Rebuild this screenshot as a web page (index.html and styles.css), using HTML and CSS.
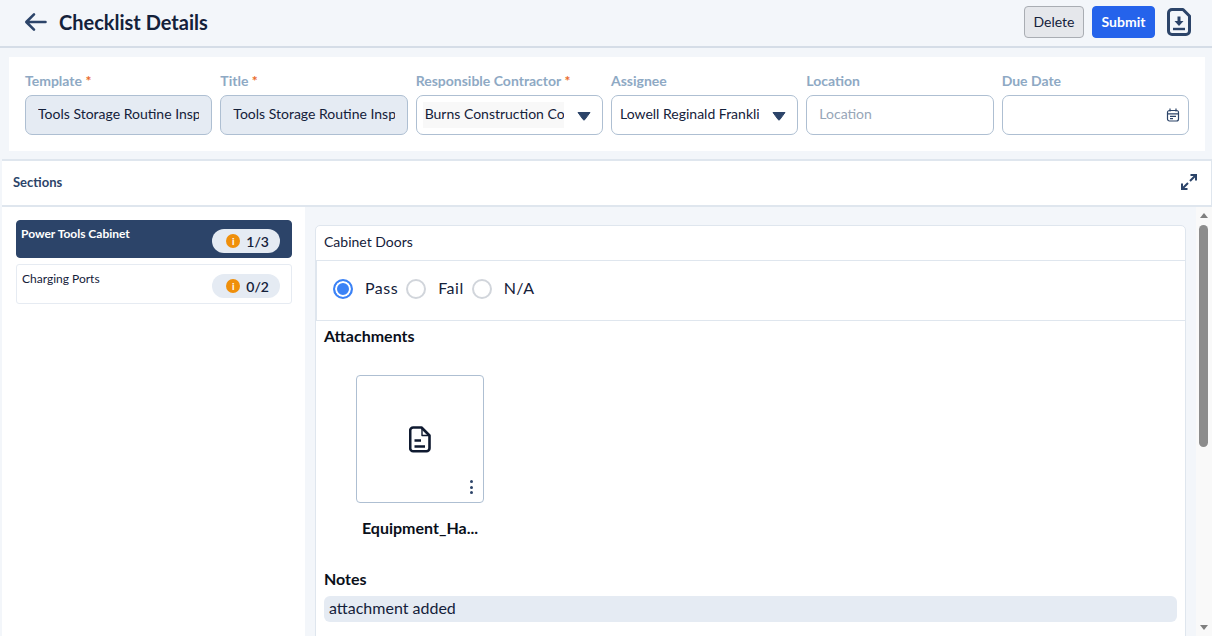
FILE: index.html
```html
<!DOCTYPE html>
<html lang="en">
<head>
  <meta charset="UTF-8">
  <title>Checklist Details</title>
  <link rel="stylesheet" href="styles.css">
</head>
<body>
  <header class="topbar">
    <div class="topbar-left">
      <svg class="back-icon" width="24" height="20" viewBox="0 0 24 20" fill="none"><path d="M21.500 10H2.500M10 2.300 2.300 10l7.700 7.700" stroke="#2c4469" stroke-width="2.600" stroke-linecap="round" stroke-linejoin="round"/></svg>
      <h1>Checklist Details</h1>
    </div>
    <div class="topbar-actions">
      <button class="btn btn-delete">Delete</button>
      <button class="btn btn-submit">Submit</button>
      <svg class="export-icon" width="24" height="28" viewBox="0 0 24 28" fill="none">
        <path d="M5 1.500h11l6.500 6.500v15a3.500 3.500 0 0 1-3.500 3.500H5A3.500 3.500 0 0 1 1.500 23V5A3.500 3.500 0 0 1 5 1.500Z" stroke="#2c4469" stroke-width="3" stroke-linejoin="round"/>
        <path d="M12 8.500v6" stroke="#2c4469" stroke-width="3"/>
        <path d="M7.500 13h9L12 18Z" fill="#2c4469"/>
        <path d="M6 21h12" stroke="#2c4469" stroke-width="2.400"/>
      </svg>
    </div>
  </header>

  <section class="form-panel">
    <div class="form-grid">
      <div class="field">
        <label>Template <span class="req">*</span></label>
        <input class="input input-locked" type="text" value="Tools Storage Routine Inspection" readonly>
      </div>
      <div class="field">
        <label>Title <span class="req">*</span></label>
        <input class="input input-locked" type="text" value="Tools Storage Routine Inspection" readonly>
      </div>
      <div class="field">
        <label>Responsible Contractor <span class="req">*</span></label>
        <div class="input select">
          <span class="select-value select-value-shaded">Burns Construction Company</span>
          <svg class="caret" width="14" height="10" viewBox="0 0 14 10"><path d="M1 1.500h12L7.800 8.600a1 1 0 0 1-1.600 0Z" fill="#2c4469" stroke="#2c4469" stroke-linejoin="round"/></svg>
        </div>
      </div>
      <div class="field">
        <label>Assignee</label>
        <div class="input select">
          <span class="select-value">Lowell Reginald Franklin</span>
          <svg class="caret" width="14" height="10" viewBox="0 0 14 10"><path d="M1 1.500h12L7.800 8.600a1 1 0 0 1-1.600 0Z" fill="#2c4469" stroke="#2c4469" stroke-linejoin="round"/></svg>
        </div>
      </div>
      <div class="field">
        <label>Location</label>
        <input class="input" type="text" placeholder="Location">
      </div>
      <div class="field">
        <label>Due Date</label>
        <div class="input date">
          <svg width="14" height="14" viewBox="0 0 14 14" fill="none" stroke="#2c4469" stroke-width="1.200">
            <rect x="1.500" y="2.500" width="11" height="10.500" rx="2"/>
            <path d="M4 .6v3M10 .6v3M1.500 5.800h11M4 8.300h6M4 10.600h3"/>
          </svg>
        </div>
      </div>
    </div>
  </section>

  <section class="sections">
    <div class="sections-head">
      <h2>Sections</h2>
      <svg width="16" height="16" viewBox="0 0 16 16" fill="none" stroke="#2c4469" stroke-width="2"><path d="M9.500 1H15v5.500M15 1 9 7M6.500 15H1V9.500M1 15l6-6"/></svg>
    </div>
    <div class="sections-body">
      <aside class="section-list">
        <div class="section-item active">
          <span class="section-name">Power Tools Cabinet</span>
          <span class="count"><span class="count-dot">i</span>1/3</span>
        </div>
        <div class="section-item">
          <span class="section-name">Charging Ports</span>
          <span class="count"><span class="count-dot">i</span>0/2</span>
        </div>
      </aside>

      <main class="detail">
        <div class="card">
          <div class="card-title">Cabinet Doors</div>
          <div class="radio-row">
            <span class="radio checked"></span><span class="radio-label">Pass</span>
            <span class="radio"></span><span class="radio-label">Fail</span>
            <span class="radio"></span><span class="radio-label">N/A</span>
          </div>
          <h3 class="block-title">Attachments</h3>
          <div class="attachment">
            <div class="thumb">
              <svg width="22" height="27" viewBox="0 0 22 27" fill="none" stroke="#0f1a30" stroke-width="2.600" stroke-linejoin="round">
                <path d="M4.200 1.500h8.300l8 8v12.800a3 3 0 0 1-3 3H4.200a3 3 0 0 1-3-3V4.500a3 3 0 0 1 3-3Z"/>
                <path d="M13 2v7.500h7" stroke-width="1.400"/>
                <path d="M5.500 14.500h6.500M5.500 20.500h10.500"/>
              </svg>
              <span class="thumb-menu"><i></i><i></i><i></i></span>
            </div>
            <div class="file-name">Equipment_Ha...</div>
          </div>
          <h3 class="block-title notes-title">Notes</h3>
          <div class="note-text">attachment added</div>
        </div>
      </main>

      <div class="scrollbar">
        <span class="arrow-up"></span>
        <span class="thumb-bar"></span>
        <span class="arrow-down"></span>
      </div>
    </div>
  </section>
</body>
</html>
```

FILE: styles.css
```css
* {
  box-sizing: border-box;
}

html, body {
  height: 100%;
}

body {
  margin: 0;
  height: 636px;
  overflow: hidden;
  display: flex;
  flex-direction: column;
  background-color: #f3f6fa;
  color: #14213a;
  font-family: Lato, "Liberation Sans", sans-serif;
}

/* top bar */
.topbar {
  height: 48px;
  flex: none;
  display: flex;
  justify-content: space-between;
  align-items: center;
  padding: 0 21px 2px 24px;
  border-bottom: 2px solid #d5dde7;
}

.topbar-left {
  display: flex;
  align-items: center;
  gap: 11px;
}

h1 {
  margin: 0;
  font-size: 20px;
  font-weight: 700;
  color: #14213a;
}

.topbar-actions {
  display: flex;
  align-items: center;
}

.btn {
  height: 32px;
  padding: 0 0 2px;
  border-radius: 4px;
  font-family: inherit;
  font-size: 14px;
}

.btn-delete {
  width: 60px;
  background-color: #e5e7eb;
  border: 1px solid #a9adb3;
  color: #14213a;
}

.btn-submit {
  width: 63px;
  margin-left: 8px;
  background-color: #2563eb;
  border: 1px solid #2563eb;
  color: #fff;
  font-weight: 700;
}

.export-icon {
  margin-left: 12px;
}

/* form */
.form-panel {
  flex: none;
  margin: 9px 7px 8px 9px;
  background-color: #fff;
  height: 94px;
  padding: 15px 16px 0;
}

.form-grid {
  display: grid;
  grid-template-columns: repeat(6, 1fr);
  gap: 8px;
}

.field label {
  display: block;
  height: 23px;
  font-size: 14px;
  font-weight: 700;
  line-height: 18px;
  color: #8ea9c4;
}

.req {
  color: #ea6a2a;
}

.input {
  display: block;
  width: 100%;
  height: 40px;
  padding: 0 12px 3px 12px;
  border: 1px solid #aebfd2;
  border-radius: 7px;
  background-color: #fff;
  font-family: inherit;
  font-size: 14px;
  color: #14213a;
  outline: none;
}

.input::placeholder {
  color: #97a6b8;
  opacity: 1;
}

.input-locked {
  background-color: #e5ebf3;
}

.select {
  display: flex;
  align-items: center;
  justify-content: space-between;
  padding: 0 11px 0 6px;
}

.select-value {
  width: 141px;
  height: 26px;
  line-height: 24px;
  overflow: hidden;
  white-space: nowrap;
  padding-left: 2px;
}

.select-value-shaded {
  background-color: #f8f8f8;
}

.caret {
  margin-top: 1px;
}

.date {
  display: flex;
  align-items: center;
  justify-content: flex-end;
  padding: 0 8px 0 0;
}

/* sections */
.sections {
  flex: 1;
  min-height: 0;
  margin-left: 2px;
  display: flex;
  flex-direction: column;
  background-color: #fff;
  border-top: 2px solid #dfe6ee;
}

.sections-head {
  height: 46px;
  flex: none;
  display: flex;
  justify-content: space-between;
  align-items: center;
  padding: 0 14px 2px 11px;
  border-right: 1px solid #dfe6ee;
  border-bottom: 2px solid #dfe6ee;
}

h2 {
  margin: 0;
  font-size: 13px;
  font-weight: 700;
  color: #2c4469;
}

.sections-body {
  flex: 1;
  min-height: 0;
  display: flex;
}

.section-list {
  width: 303px;
  flex: none;
  padding: 13px 13px 0 14px;
  display: flex;
  flex-direction: column;
  gap: 6px;
}

.section-item {
  height: 40px;
  display: flex;
  justify-content: space-between;
  padding: 7px 11px 0 5px;
  border: 1px solid #e6ebf2;
  border-radius: 3px;
  font-size: 12px;
  color: #14213a;
}

.section-item.active {
  height: 38px;
  padding: 6px 11px 0 4px;
  background-color: #2c4469;
  border-color: #2c4469;
  border-radius: 4px;
  color: #fff;
  font-weight: 700;
}

.section-name {
  line-height: 14px;
}

.count {
  height: 24px;
  margin-top: 2px;
  margin-left: auto;
  display: flex;
  align-items: center;
  gap: 6px;
  padding: 0 11px 0 14px;
  border-radius: 12px;
  background-color: #e5ebf3;
  color: #14213a;
  font-size: 14px;
  font-weight: 600;
}

.count-dot {
  width: 14px;
  height: 14px;
  border-radius: 50%;
  background-color: #ef8f0b;
  color: #fff;
  font-size: 10px;
  font-weight: 700;
  line-height: 14px;
  text-align: center;
}

/* detail */
.detail {
  flex: 1;
  min-width: 0;
  padding: 18px 10px 0 10px;
  background-color: #f3f6fa;
  overflow: hidden;
}

.card {
  height: 460px;
  background-color: #fff;
  border: 1px solid #dfe6ee;
  border-radius: 5px;
}

.card-title {
  height: 34px;
  padding-left: 8px;
  font-size: 14px;
  line-height: 32px;
  color: #14213a;
}

.radio-row {
  height: 61px;
  display: flex;
  align-items: center;
  padding: 0 0 3px 16px;
  border-top: 1px solid #dfe6ee;
  border-bottom: 1px solid #dfe6ee;
  border-left: 1px solid #dfe6ee;
  font-size: 16px;
  letter-spacing: 0.5px;
}

.radio {
  width: 20px;
  height: 20px;
  flex: none;
  border: 2px solid #d1d5db;
  border-radius: 50%;
  background-color: #fff;
}

.radio.checked {
  border-color: #3b82f6;
  background-color: #3b82f6;
  box-shadow: inset 0 0 0 2px #fff;
}

.radio-label {
  margin-left: 12px;
  margin-right: 8px;
  padding-bottom: 4px;
}

.block-title {
  margin: 0;
  padding-left: 8px;
  font-size: 16px;
  font-weight: 700;
  line-height: 18px;
  color: #0a0f1a;
}

.card > .block-title:first-of-type {
  margin-top: 6px;
}

.attachment {
  width: 128px;
  margin: 30px 0 0 40px;
}

.thumb {
  position: relative;
  height: 128px;
  display: flex;
  align-items: center;
  justify-content: center;
  border: 1px solid #aebfd2;
  border-radius: 4px;
}

.thumb-menu {
  position: absolute;
  right: 10px;
  bottom: 8px;
  display: flex;
  flex-direction: column;
  gap: 2.500px;
}

.thumb-menu i {
  width: 3px;
  height: 3px;
  border-radius: 50%;
  background-color: #2c4469;
}

.file-name {
  margin-top: 16px;
  font-size: 16px;
  font-weight: 700;
  line-height: 18px;
  text-align: center;
  color: #0a0f1a;
}

.notes-title {
  margin-top: 33px;
}

.note-text {
  height: 26px;
  margin: 8px 8px 0;
  padding-left: 5px;
  border-radius: 6px;
  background-color: #e5ebf3;
  font-size: 16px;
  line-height: 23px;
  color: #14213a;
}

/* scrollbar */
.scrollbar {
  width: 16px;
  flex: none;
  display: flex;
  flex-direction: column;
  align-items: center;
  padding: 6px 1px 6px 0;
  background-color: #f9f9f9;
}

.thumb-bar {
  width: 9px;
  height: 222px;
  margin-top: 7px;
  border-radius: 5px;
  background-color: #8c8c8c;
}

.arrow-up,
.arrow-down {
  width: 0;
  height: 0;
  border-left: 4px solid transparent;
  border-right: 4px solid transparent;
}

.arrow-up {
  border-bottom: 5px solid #7f7f7f;
}

.arrow-down {
  margin-top: auto;
  border-top: 5px solid #7f7f7f;
}
```
